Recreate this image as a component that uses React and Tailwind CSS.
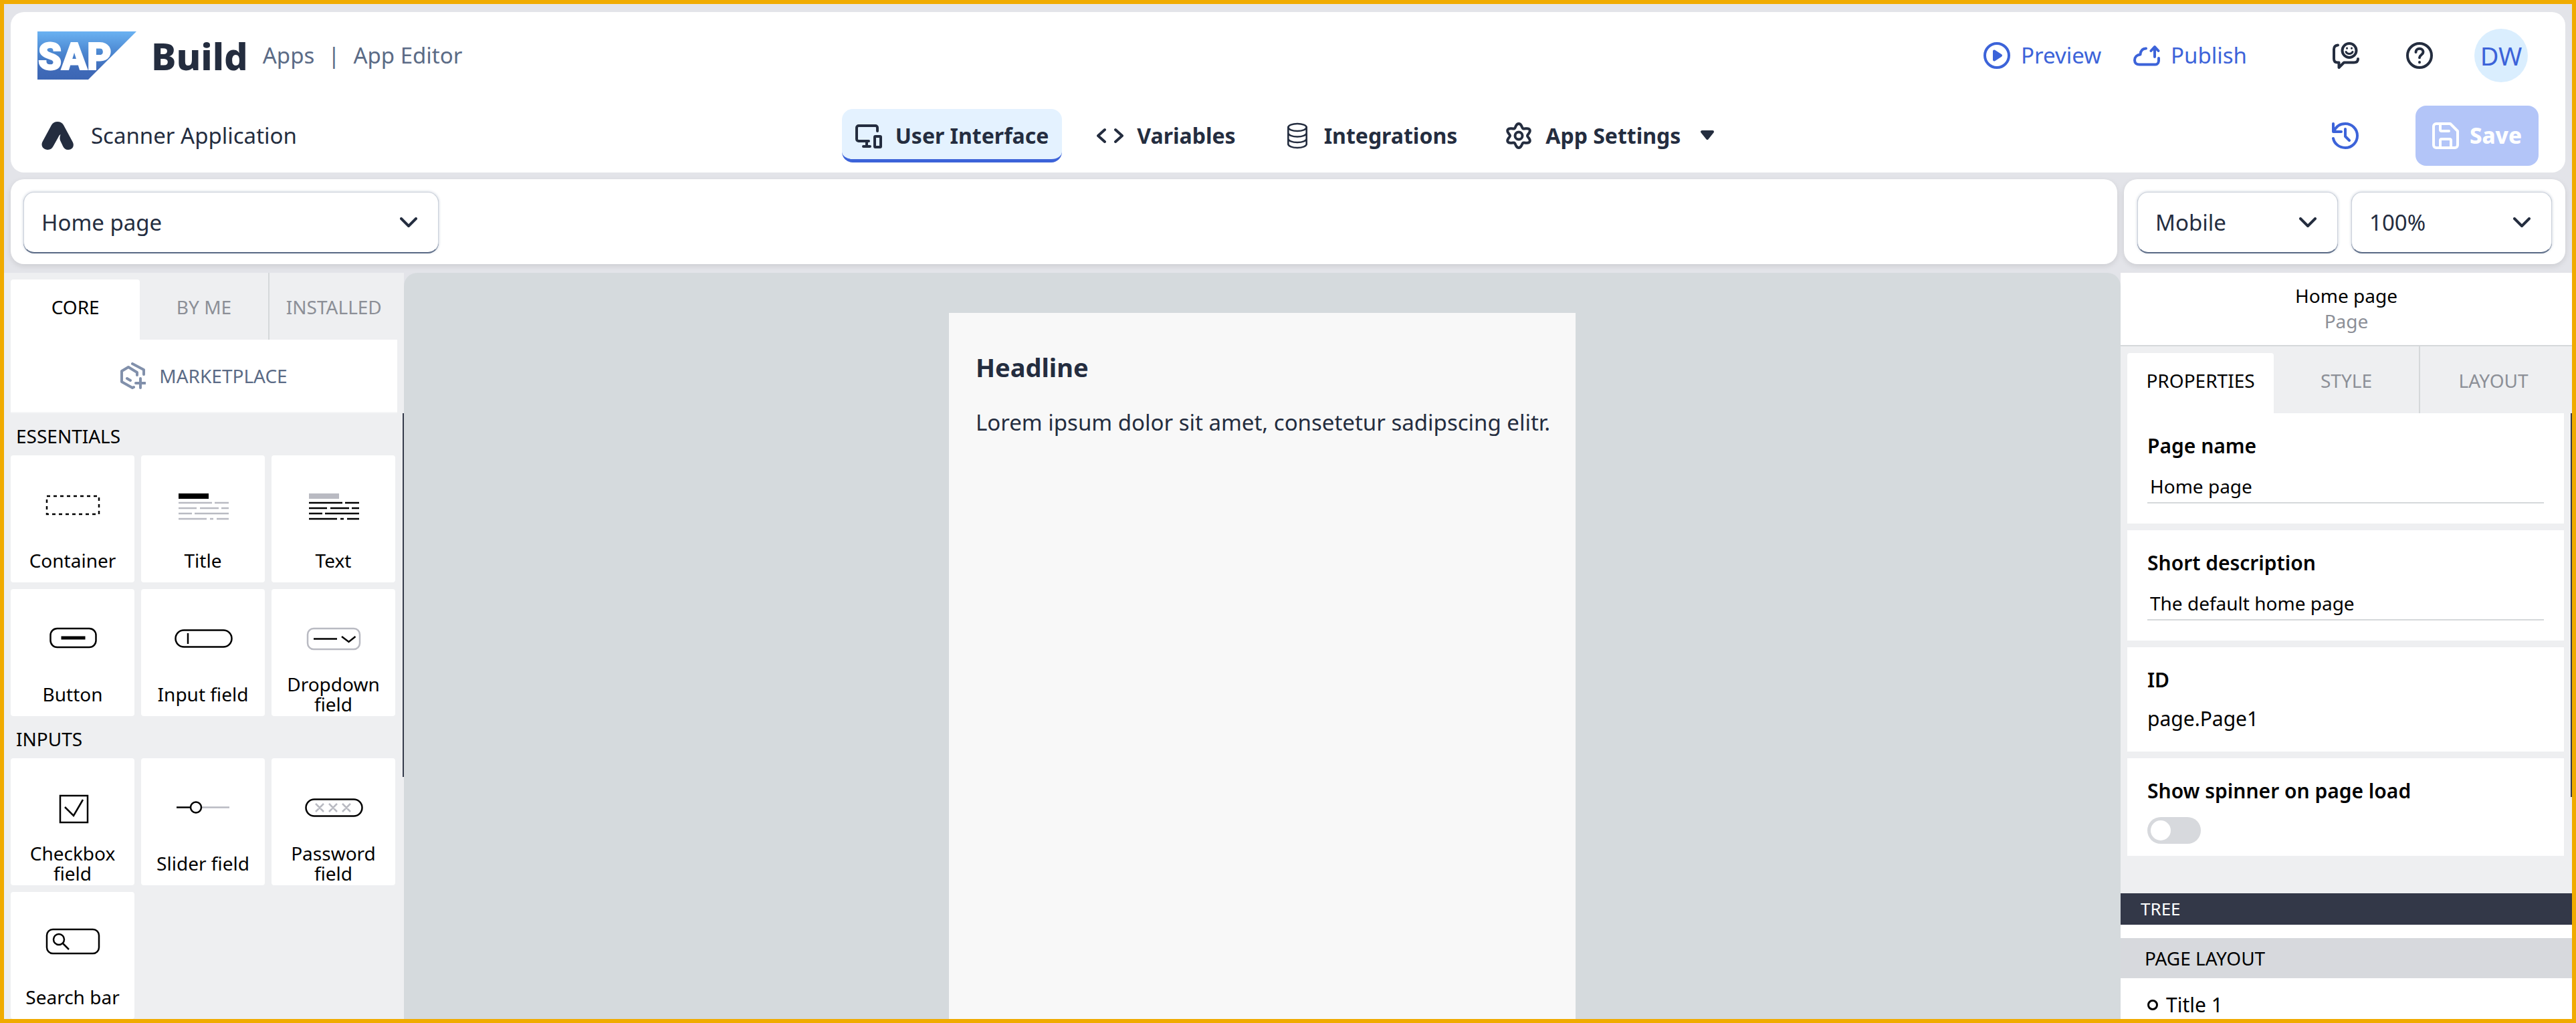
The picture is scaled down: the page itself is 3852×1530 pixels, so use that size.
import React from "react";

const stroke = {
  fill: "none",
  stroke: "currentColor",
  strokeWidth: 4,
  strokeLinecap: "round",
  strokeLinejoin: "round",
};

function Icon({ children, className = "size-10", box = "0 0 40 40" }) {
  return (
    <svg viewBox={box} className={className + " shrink-0"} aria-hidden="true" {...stroke}>
      {children}
    </svg>
  );
}

function SapLogo() {
  return (
    <svg viewBox="0 0 148 72" className="h-[72px] w-[148px] shrink-0" role="img" aria-label="SAP">
      <defs>
        <linearGradient id="sap" x1="0" y1="0" x2="0" y2="1">
          <stop offset="0" stopColor="#6ab2f2" />
          <stop offset="0.45" stopColor="#4b86d0" />
          <stop offset="0.8" stopColor="#3f6ab8" />
          <stop offset="1" stopColor="#3c66b4" />
        </linearGradient>
      </defs>
      <path d="M0 0H148L76 72H0Z" fill="url(#sap)" />
      <text x="1" y="57" fill="#fff" stroke="#fff" strokeWidth="2" className="font-[Roboto] text-[56px] font-black">
        SAP
      </text>
    </svg>
  );
}

const UiIcon = () => (
  <Icon>
    <path d="M33 13V8a3 3 0 0 0-3-3H5a3 3 0 0 0-3 3v17a3 3 0 0 0 3 3h15M17 28v8M12 36h10" />
    <rect x="29" y="21" width="9" height="16" rx="1" />
  </Icon>
);
const CodeIcon = () => (
  <Icon>
    <path d="M12 11 2 20l10 9M28 11l10 9-10 9" />
  </Icon>
);
const DbIcon = () => (
  <Icon>
    <g strokeWidth="2.6">
      <ellipse cx="20" cy="7.500" rx="13.700" ry="5.500" />
      <path d="M6.300 7.500v25c0 3 6 5.500 13.700 5.500s13.700-2.500 13.700-5.500v-25M6.300 16c0 3 6 5.500 13.700 5.500S33.700 19 33.700 16M6.300 24.500c0 3 6 5.500 13.700 5.500s13.700-2.500 13.700-5.500" />
    </g>
  </Icon>
);

/* Six rounded teeth: the radius swings around the rim as the angle advances. */
const GEAR_RIM =
  "M" +
  Array.from({ length: 120 }, (_, i) => {
    const a = (i * Math.PI) / 60;
    const r = 15.2 + 2.8 * Math.cos(6 * a);
    return (20 + r * Math.sin(a) * 1.05).toFixed(2) + " " + (20 - r * Math.cos(a)).toFixed(2);
  }).join("L") +
  "Z";

const GearIcon = () => (
  <Icon>
    <path d={GEAR_RIM} />
    <circle cx="20" cy="20" r="5.500" />
  </Icon>
);
const CaretIcon = () => (
  <Icon>
    <path d="M12 14h16l-8 10Z" fill="currentColor" />
  </Icon>
);

const NAV = [
  { label: "User Interface", icon: UiIcon, active: true },
  { label: "Variables", icon: CodeIcon },
  { label: "Integrations", icon: DbIcon },
  { label: "App Settings", icon: GearIcon, menu: true },
];

function NavTab({ label, icon: Glyph, active, menu }) {
  return (
    <button
      type="button"
      aria-current={active ? "page" : undefined}
      className={
        "flex h-20 items-center gap-5 rounded-2xl border-b-[5px] px-5 pt-[5px] text-[32px] font-bold " +
        (active ? "border-[#3c63d9] bg-[#e4f2ff]" : "border-transparent")
      }
    >
      <Glyph />
      {label}
      {menu && <CaretIcon />}
    </button>
  );
}

function Header() {
  return (
    <header className="rounded-[20px] bg-white px-10">
      <div className="flex h-[130px] items-center pr-4 text-[33px]">
        <SapLogo />
        <h1 className="ml-[22px] text-[56px] leading-[60px] font-extrabold">Build</h1>
        <nav aria-label="Breadcrumb" className="ml-[22px] flex items-center gap-5 text-[#5b6b86]">
          <a href="#apps">Apps</a>
          <span aria-hidden="true">|</span>
          <a href="#editor">App Editor</a>
        </nav>
        <div className="ml-auto flex items-center text-[#3c63d9]">
          <button type="button" className="flex items-center gap-4">
            <Icon>
              <circle cx="20" cy="20" r="18" />
              <path d="M16 13.500 26 20l-10 6.500Z" fill="currentColor" />
            </Icon>
            Preview
          </button>
          <button type="button" className="ml-12 flex items-center gap-4">
            <Icon>
              <path d="M19 9.500c-5 0-8 3.500-8.500 9C5.500 19 2 22.500 2 27s3 6.500 7 6.500h24c3.500 0 5-3 5-6V24M32 22V8M26.500 13 32 7l5.500 6" />
            </Icon>
            Publish
          </button>
          <button type="button" aria-label="Feedback" className="ml-32 text-[#242d3f]">
            <Icon>
              <path d="M8 4.500C4 5 2 7 2 10.500V25c0 3.500 2 5.500 5.500 5.500H9.500V38l7.500-7.500h15c3.500 0 6-1.500 6-5.500" />
              <circle cx="25" cy="12.500" r="10.500" />
              <path strokeWidth="3" d="M20 14.500c2 4 8 4 10 0M21.500 9v.2M28.500 9v.2" />
            </Icon>
          </button>
          <button type="button" aria-label="Help" className="ml-[70px] text-[#242d3f]">
            <Icon>
              <circle cx="20" cy="20" r="18" />
              <path d="M14.500 15c0-3.200 2.400-5.200 5.500-5.200s5.500 2 5.500 5c0 4.200-5.500 4.200-5.500 8.400M20 30v.3" />
            </Icon>
          </button>
          <button type="button" aria-label="Account DW" className="ml-[62px] size-20 rounded-full bg-[#daeefe] text-[38px]">
            DW
          </button>
        </div>
      </div>
      <div className="grid h-[110px] grid-cols-[1fr_auto_1fr] items-center">
        <div className="flex items-center gap-[26px] pl-1.5 text-[33px]">
          <svg viewBox="0 0 48 42" className="h-[42px] w-12" aria-hidden="true">
            <path
              d="M24 0c4 0 7 1.500 9 5l13.500 25c3.500 6.500-.5 12-6.500 12-4 0-6.500-2-8-5.500L28 28c-1-3-.5-6 .5-9-1.500.8-2.500 2.500-3.500 4.500L18 36c-1.800 3.800-4.500 6-8.500 6C2.500 42-1.500 36 1.500 30L15 5c2-3.500 5-5 9-5Z"
              fill="#242d3f"
            />
          </svg>
          Scanner Application
        </div>
        <nav aria-label="Editor" className="flex gap-8">
          {NAV.map((t) => (
            <NavTab key={t.label} {...t} />
          ))}
        </nav>
        <div className="flex items-center justify-end gap-[85px]">
          <button type="button" aria-label="History" className="text-[#3c63d9]">
            <Icon>
              <path d="M2 2v12h12M3 13.500C6 6.500 12 2 20 2c10 0 18 8 18 18s-8 18-18 18c-9.500 0-16.500-6.500-18-14M20 10v11l6 6" />
            </Icon>
          </button>
          <button
            type="button"
            disabled
            className="flex h-[90px] w-46 items-center justify-center gap-4 rounded-2xl bg-[#b3c5f8] text-[33px] font-extrabold text-white"
          >
            <Icon>
              <path d="M6 2h21L38 13v21a4 4 0 0 1-4 4H6a4 4 0 0 1-4-4V6a4 4 0 0 1 4-4ZM12 2v9a2 2 0 0 0 2 2h11M12 38V27a2 2 0 0 1 2-2h12a2 2 0 0 1 2 2v11" />
            </Icon>
            Save
          </button>
        </div>
      </div>
    </header>
  );
}

function Select({ label, value, className }) {
  return (
    <div className={"relative flex h-[91px] items-center " + className}>
      <select
        aria-label={label}
        defaultValue={value}
        className="h-full w-full appearance-none rounded-2xl border border-[#ccd2db] border-b-[#5b6b86] bg-white pl-[26px] text-[33px] shadow-[0_1px_0_#5b6b86,0_0_4px_#c3cad6]"
      >
        <option>{value}</option>
      </select>
      <svg viewBox="0 0 26 16" className="pointer-events-none absolute right-8 h-4 w-[26px]" aria-hidden="true" {...stroke}>
        <path d="m2 2 11 11L24 2" />
      </svg>
    </div>
  );
}

const G = "#b9bac2";

function TextLines({ head, body }) {
  return (
    <>
      <path stroke={head} strokeWidth="8" d="M13 41h45" />
      <path
        stroke={body}
        d="M13 51h50M67 51h21M13 59h27M45 59h28M77 59h11M13 67h20M37 67h51M13 75h42M60 75h5M70 75h18"
      />
    </>
  );
}

/* Component artwork, drawn on a 100 x 100 board that is centred in each tile. */
const ART = {
  Container: <rect x="11" y="41" width="78" height="27" strokeDasharray="5 5" />,
  Title: <TextLines head="#000" body={G} />,
  Text: <TextLines head={G} body="#000" />,
  Button: (
    <>
      <rect x="16.500" y="39" width="68" height="28" rx="10" />
      <path strokeWidth="5" d="M32.500 53h36" />
    </>
  ),
  "Input field": (
    <>
      <rect x="8.500" y="41.500" width="84" height="25" rx="12.500" />
      <path d="M27 46v16" />
    </>
  ),
  "Dropdown field": (
    <>
      <rect x="11" y="39" width="78" height="31" rx="9" stroke={G} />
      <path d="M20 54.500h35M62 51l10.500 8 10-8" />
    </>
  ),
  "Checkbox field": (
    <>
      <rect x="31" y="36" width="41" height="40" />
      <path d="m38 53 13 13 14-24" />
    </>
  ),
  "Slider field": (
    <>
      <path stroke={G} d="M37 53.500h52" />
      <path d="M10 53.500h21" />
      <circle cx="39" cy="53.500" r="8" fill="#fff" />
    </>
  ),
  "Password field": (
    <>
      <rect x="8.500" y="41.500" width="84" height="25" rx="12.500" />
      <path stroke={G} d="m23 48 12 12M35 48 23 60M43 48l12 12M55 48 43 60M63 48l12 12M75 48 63 60" />
    </>
  ),
  "Search bar": (
    <>
      <rect x="11" y="36" width="78" height="36" rx="9" />
      <circle cx="29" cy="51" r="8" />
      <path d="m35 57 9 9" />
    </>
  ),
};

function Tile({ name }) {
  return (
    <button type="button" className="flex h-[190px] flex-col items-center justify-between rounded bg-white pt-5 pb-[3px]">
      <svg viewBox="0 0 100 100" className="h-[100px] w-[100px]" aria-hidden="true" fill="none" stroke="#000" strokeWidth="2.500">
        {ART[name]}
      </svg>
      <span className="flex h-[60px] items-center px-3 text-center text-[28px] leading-[30px] text-black">{name}</span>
    </button>
  );
}

function Group({ title, names }) {
  return (
    <section>
      <h2 className="flex h-[63px] items-center pt-1 pl-2 text-[28px] text-black">{title}</h2>
      <div className="grid grid-cols-3 gap-2.5">
        {names.map((n) => (
          <Tile key={n} name={n} />
        ))}
      </div>
    </section>
  );
}

function Tabs({ labels, className }) {
  return (
    <div role="tablist" className={"grid h-[100px] shrink-0 grid-cols-3 pl-2.5 text-[28px] " + className}>
      {labels.map((l, i) => (
        <button
          key={l}
          type="button"
          role="tab"
          aria-selected={i === 0}
          className={
            i === 0
              ? "mt-2.5 rounded-t bg-white pb-2 text-black"
              : i === 1
                ? "border-r-2 border-[#d5d8da] pt-0.5 text-[#8c8f97]"
                : "pt-0.5 text-[#8c8f97]"
          }
        >
          {l}
        </button>
      ))}
    </div>
  );
}

function Library() {
  return (
    <aside className="flex w-[598px] shrink-0 flex-col overflow-hidden bg-[#eeeff1]">
      <Tabs labels={["CORE", "BY ME", "INSTALLED"]} className="pr-2" />
      <button
        type="button"
        className="mx-2.5 flex h-[110px] shrink-0 items-center justify-center gap-5 border-b-2 border-[#f5f6f7] bg-white text-[28px] text-[#5b6b86]"
      >
        <svg viewBox="0 0 38 40" className="h-10 w-[38px] text-[#8190ab]" aria-hidden="true" {...stroke}>
          <path d="M18 2l17 9v7M25 19v-4L12 7 2 13v16l16 9 2-1M10 24l5 3M30 24v14M23 31h14" />
        </svg>
        MARKETPLACE
      </button>
      <div className="flex min-h-0 flex-1">
        <div className="min-w-0 flex-1 overflow-hidden pr-[11px] pl-2.5">
          <Group title="ESSENTIALS" names={["Container", "Title", "Text", "Button", "Input field", "Dropdown field"]} />
          <Group title="INPUTS" names={["Checkbox field", "Slider field", "Password field", "Search bar"]} />
        </div>
        <div className="h-3/5 w-0.5 bg-[#343a4a]" />
      </div>
    </aside>
  );
}

function Canvas() {
  return (
    <main className="flex min-w-0 flex-1 justify-center rounded-t-[20px] bg-[#d5dadd] pt-[60px]">
      <article className="w-[937px] bg-[#f8f8f8] px-10 pt-14">
        <h2 className="text-[38px] leading-[50px] font-bold">Headline</h2>
        <p className="mt-9 text-[33px] leading-[44px] whitespace-nowrap">
          Lorem ipsum dolor sit amet, consetetur sadipscing elitr.
        </p>
      </article>
    </main>
  );
}

function TextProperty({ id, label, value }) {
  return (
    <div className="bg-white px-[30px] py-[30px]">
      <label htmlFor={id} className="block text-[30px] leading-[38px] font-semibold">
        {label}
      </label>
      <input id={id} defaultValue={value} className="mt-4 h-[51px] w-full border-b-2 border-[#d5d8da] bg-transparent pl-1" />
    </div>
  );
}

function Inspector() {
  return (
    <aside className="flex w-[675px] shrink-0 flex-col overflow-hidden bg-[#eeeff1] text-[28px] leading-[38px] text-black">
      <div className="h-[110px] shrink-0 border-b-2 border-[#d5d8da] bg-white pt-[15px] text-center">
        <h2>Home page</h2>
        <p className="text-[#8c8f97]">Page</p>
      </div>
      <Tabs labels={["PROPERTIES", "STYLE", "LAYOUT"]} className="pr-2" />
      <div className="flex shrink-0">
        <div className="flex flex-1 flex-col gap-2.5 pr-2.5 pb-14 pl-2.5">
          <TextProperty id="page-name" label="Page name" value="Home page" />
          <TextProperty id="short-description" label="Short description" value="The default home page" />
          <div className="bg-white px-[30px] py-[30px] text-[30px] leading-[38px]">
            <h3 className="font-semibold">ID</h3>
            <p className="mt-5">page.Page1</p>
          </div>
          <div className="bg-white px-[30px] pt-[30px] pb-[18px]">
            <label htmlFor="spinner" className="block text-[30px] leading-[38px] font-semibold">
              Show spinner on page load
            </label>
            <input
              id="spinner"
              type="checkbox"
              role="switch"
              className="mt-5 flex h-10 w-20 appearance-none items-center rounded-full bg-[#d7d9dd] pl-[5px] before:size-[30px] before:rounded-full before:bg-white"
            />
          </div>
        </div>
        <div className="h-4/5 w-0.5 bg-[#343a4a]" />
      </div>
      <section className="flex flex-1 flex-col bg-white">
        <h2 className="bg-[#333848] pl-[30px] text-[26px] leading-[47px] text-white">TREE</h2>
        <h3 className="mt-5 bg-[#d7d9dd] pl-9 leading-[60px]">PAGE LAYOUT</h3>
        <a href="#title-1" className="flex h-20 items-center gap-3 pl-10 text-[30px]">
          <span className="size-4 rounded-full border-[3px] border-black" />
          Title 1
        </a>
      </section>
    </aside>
  );
}

export default function App() {
  return (
    <div className="flex h-screen flex-col overflow-hidden border-[6px] border-[#f0ab00] bg-[#e3e4e9] font-['Noto_Sans',sans-serif] text-[#242d3f]">
      <div className="shrink-0 px-2.5 pt-3 pb-[13px]">
        <Header />
        <div className="mt-2.5 flex gap-2.5">
          <div className="h-[127px] flex-1 rounded-[20px] bg-white px-[19px] pt-[19px] shadow-[0_3px_8px_#0000001a]">
            <Select label="Page" value="Home page" className="w-[621px]" />
          </div>
          <div className="flex h-[127px] gap-5 rounded-[20px] bg-white px-5 pt-[19px] shadow-[0_3px_8px_#0000001a]">
            <Select label="Device" value="Mobile" className="w-[300px]" />
            <Select label="Zoom" value="100%" className="w-[300px]" />
          </div>
        </div>
      </div>
      <div className="flex min-h-0 flex-1">
        <Library />
        <Canvas />
        <Inspector />
      </div>
    </div>
  );
}
